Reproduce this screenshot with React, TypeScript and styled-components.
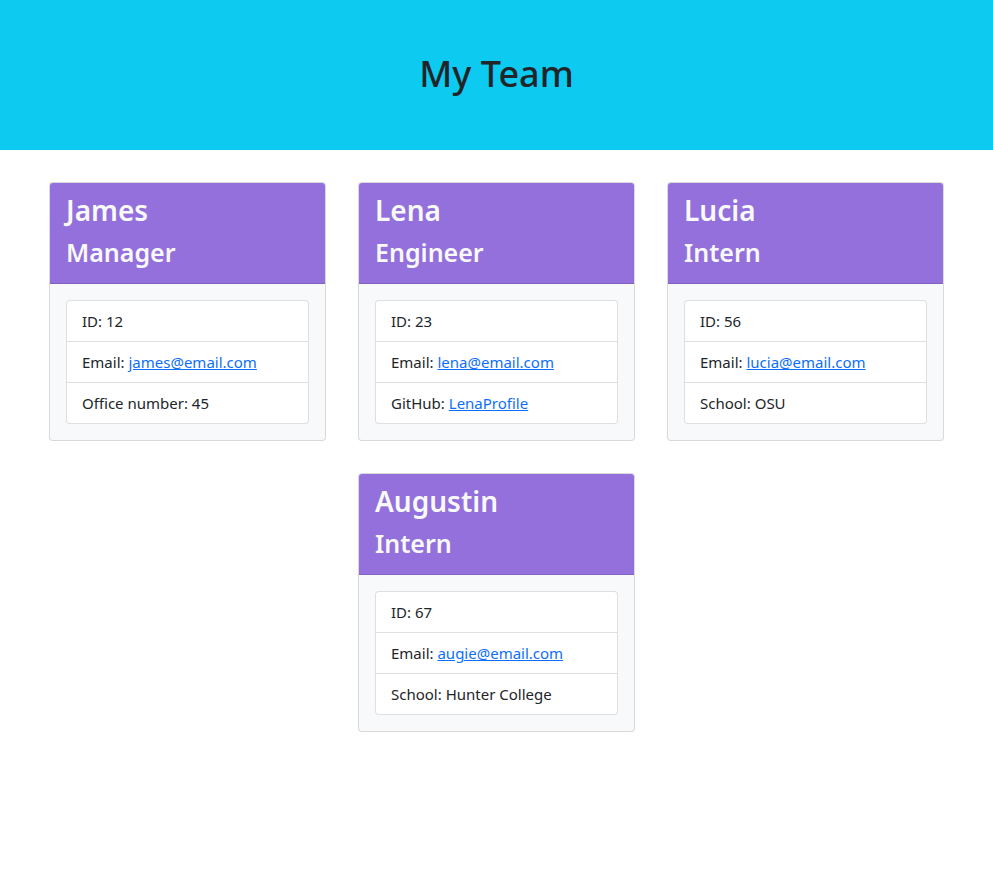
import React from "react";
import styled, { createGlobalStyle } from "styled-components";

const Global = createGlobalStyle`
  html, body { margin: 0; padding: 0; background: #fff; }
  body {
    font-family: "Noto Sans", "Liberation Sans", sans-serif;
    color: #212529;
    font-size: 16px;
    line-height: 1.5;
  }
  * { box-sizing: border-box; }
`;

const Header = styled.header`
  height: 150px;
  background: #0dcaf0;
  display: flex;
  align-items: center;
  justify-content: center;
  padding-bottom: 2px;
`;

const Title = styled.h1`
  margin: 0;
  font-size: 36px;
  font-weight: 500;
  line-height: 1.2;
  color: #212529;
`;

const Grid = styled.main`
  display: flex;
  flex-wrap: wrap;
  justify-content: center;
  gap: 32px 32px;
  padding: 32px 49px;
`;

const Card = styled.div`
  width: 277px;
  background: #f8f9fa;
  border: 1px solid rgba(0, 0, 0, 0.125);
  border-radius: 4px;
  overflow: hidden;
`;

const CardHeader = styled.div`
  background: #9370db;
  color: #f8f9fa;
  padding: 7px 16px 8px;
  height: 101px;
  border-bottom: 1px solid rgba(0, 0, 0, 0.125);
`;

const Name = styled.h2`
  margin: 0 0 2px;
  font-size: 28px;
  font-weight: 600;
  line-height: 40px;
`;

const Role = styled.h3`
  margin: 0;
  font-size: 25px;
  font-weight: 600;
  line-height: 40px;
`;

const CardBody = styled.div`
  padding: 16px;
`;

const List = styled.ul`
  list-style: none;
  margin: 0;
  padding: 0;
  background: #fff;
  border: 1px solid rgba(0, 0, 0, 0.125);
  border-radius: 4px;
`;

const Item = styled.li`
  padding: 8px 15px;
  font-size: 15px;
  line-height: 24px;
  & + & {
    border-top: 1px solid rgba(0, 0, 0, 0.125);
  }
`;

const Link = styled.a`
  color: #0d6efd;
  text-decoration: underline;
`;

type Member = {
  name: string;
  role: string;
  id: number;
  email: string;
  extraLabel: string;
  extra: string;
  extraLink?: boolean;
};

const team: Member[] = [
  { name: "James", role: "Manager", id: 12, email: "james@email.com", extraLabel: "Office number", extra: "45" },
  { name: "Lena", role: "Engineer", id: 23, email: "lena@email.com", extraLabel: "GitHub", extra: "LenaProfile", extraLink: true },
  { name: "Lucia", role: "Intern", id: 56, email: "lucia@email.com", extraLabel: "School", extra: "OSU" },
  { name: "Augustin", role: "Intern", id: 67, email: "augie@email.com", extraLabel: "School", extra: "Hunter College" },
];

export default function App() {
  return (
    <>
      <Global />
      <Header>
        <Title>My Team</Title>
      </Header>
      <Grid>
        {team.map((m) => (
          <Card key={m.id}>
            <CardHeader>
              <Name>{m.name}</Name>
              <Role>{m.role}</Role>
            </CardHeader>
            <CardBody>
              <List>
                <Item>ID: {m.id}</Item>
                <Item>
                  Email: <Link href={`mailto:${m.email}`}>{m.email}</Link>
                </Item>
                <Item>
                  {m.extraLabel}:{" "}
                  {m.extraLink ? <Link href="#">{m.extra}</Link> : m.extra}
                </Item>
              </List>
            </CardBody>
          </Card>
        ))}
      </Grid>
    </>
  );
}
